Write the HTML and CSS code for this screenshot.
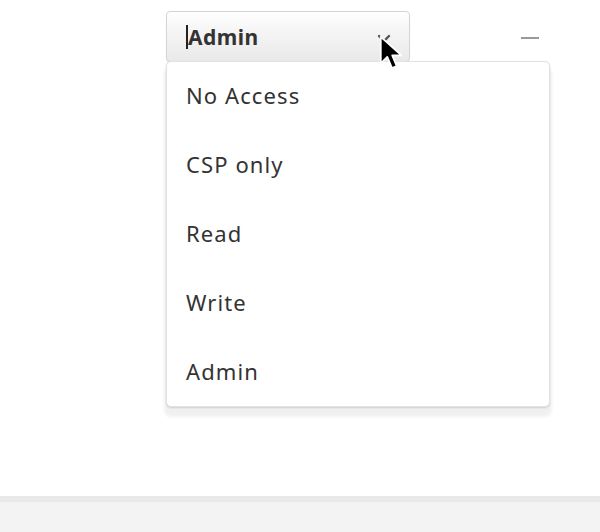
FILE: index.html
```html
<!DOCTYPE html>
<html>
<head>
  <meta charset="utf-8">
  <title>Permissions</title>
  <link rel="stylesheet" href="styles.css">
</head>
<body>
  <div class="page">
    <div class="row">
      <div class="select-wrap">
        <div class="select">
          <span class="caret"></span>
          <span class="value">Admin</span>
          <svg class="chevron" width="14" height="10" viewBox="0 0 14 10">
            <path d="M2 3 L7 8 L12 3" fill="none" stroke="#555" stroke-width="2.4" stroke-linecap="round"/>
          </svg>
        </div>

        <ul class="menu">
          <li>No Access</li>
          <li>CSP only</li>
          <li>Read</li>
          <li>Write</li>
          <li>Admin</li>
        </ul>

        <svg class="pointer" width="26" height="38" viewBox="0 0 22 32">
          <path d="M1.5 1.5 L1.5 24 L7 18.5 L11 28 L15 26.3 L11.2 17.2 L19 17.2 Z" fill="#000" stroke="#fff" stroke-width="1.5" stroke-linejoin="round"/>
        </svg>
      </div>

      <span class="remove"></span>
    </div>
  </div>

  <div class="footer">
    <div class="footer-top"></div>
  </div>
</body>
</html>
```

FILE: styles.css
```css
body {
  margin: 0;
  font-family: "Noto Sans", "DejaVu Sans", sans-serif;
  color: #333;
  background: #fff;
}

.page {
  height: 496px;
}

.row {
  display: flex;
  align-items: center;
  padding: 11px 0 0 166px;
}

.select-wrap {
  position: relative;
}

.select {
  display: flex;
  align-items: center;
  box-sizing: border-box;
  width: 244px;
  height: 51px;
  padding: 0 18px 0 19px;
  border: 1px solid #d4d4d4;
  border-radius: 4px;
  background: linear-gradient(#ffffff, #f5f5f5 40%, #e9e9e9);
  box-shadow: 0 1px 1px rgba(0, 0, 0, 0.08);
}

.caret {
  width: 2px;
  height: 24px;
  background: #222;
}

.value {
  flex: 1;
  font-size: 21px;
  font-weight: bold;
  letter-spacing: 0.5px;
  color: #333;
}

.chevron {
  margin-top: 2px;
}

.menu {
  position: absolute;
  top: 50px;
  left: 0;
  width: 384px;
  box-sizing: border-box;
  list-style: none;
  margin: 0;
  padding: 14px 0 16px;
  background: #fff;
  border: 1px solid #e2e2e2;
  border-radius: 5px;
  box-shadow: 0 1px 2px rgba(0, 0, 0, 0.14), 0 8px 3px 2px rgba(0, 0, 0, 0.06);
}

.menu li {
  height: 69px;
  line-height: 38px;
  padding-left: 19px;
  font-size: 22px;
  letter-spacing: 1.1px;
  color: #333;
}

.menu li:last-child {
  height: auto;
}

.pointer {
  position: absolute;
  left: 213px;
  top: 24px;
}

.remove {
  width: 18px;
  height: 2px;
  background: #999;
  margin: 2px 0 0 111px;
}

.footer {
  height: 36px;
  background: #f3f3f3;
}

.footer-top {
  height: 6px;
  background: #e9e9e9;
}
```
